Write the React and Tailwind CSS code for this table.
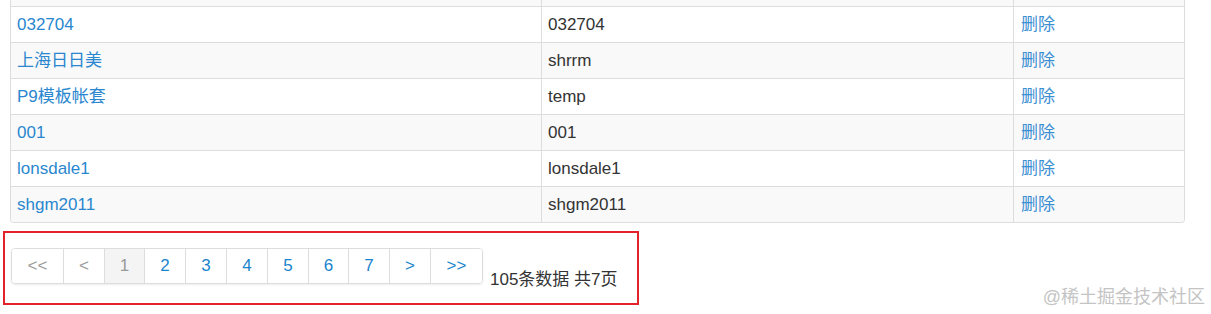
import React from "react";

const rows = [
  { name: "032704", code: "032704" },
  { name: "上海日日美", code: "shrrm" },
  { name: "P9模板帐套", code: "temp" },
  { name: "001", code: "001" },
  { name: "lonsdale1", code: "lonsdale1" },
  { name: "shgm2011", code: "shgm2011" },
];

const pages = [
  { label: "<<", w: "w-[51px]", kind: "disabled" },
  { label: "<", w: "w-[41px]", kind: "disabled" },
  { label: "1", w: "w-[40px]", kind: "active" },
  { label: "2", w: "w-[41px]", kind: "link" },
  { label: "3", w: "w-[41px]", kind: "link" },
  { label: "4", w: "w-[41px]", kind: "link" },
  { label: "5", w: "w-[41px]", kind: "link" },
  { label: "6", w: "w-[40px]", kind: "link" },
  { label: "7", w: "w-[41px]", kind: "link" },
  { label: ">", w: "w-[41px]", kind: "link" },
  { label: ">>", w: "w-[52px]", kind: "link" },
];

export default function App() {
  const font = {
    fontFamily: '"Liberation Sans", Arial, "Noto Sans CJK SC", sans-serif',
  };
  return (
    <div className="relative w-[1211px] h-[314px] bg-white overflow-hidden text-[#333]" style={font}>
      {/* table */}
      <div className="ml-[10px] w-[1175px] border border-t-0 border-[#ddd] rounded-b-[4px] overflow-hidden text-[17px] leading-[20px]">
        <div className="grid grid-cols-[530px_472px_1fr] h-[6px] bg-[#f9f9f9]">
          <div />
          <div className="border-l border-[#ddd]" />
          <div className="border-l border-[#ddd]" />
        </div>
        {rows.map((r, i) => (
          <div
            key={i}
            className={
              "grid grid-cols-[530px_472px_1fr] h-[36px] border-t border-[#ddd] " +
              (i % 2 === 1 ? "bg-[#f9f9f9]" : "bg-white")
            }
          >
            <div className="flex items-center px-[6px] text-[#2a87cf]">{r.name}</div>
            <div className="flex items-center border-l border-[#ddd] px-[6px] text-[#333]">{r.code}</div>
            <div className="flex items-center border-l border-[#ddd] px-[7px] text-[#3b8fd3]">删除</div>
          </div>
        ))}
      </div>

      {/* red highlight box */}
      <div className="ml-[3px] mt-[8px] w-[636px] h-[74px] border-2 border-[#e4222b] pl-[6px] pt-[15px]">
        <div className="flex items-start">
          <div className="flex h-[36px] border border-[#ddd] rounded-[4px] overflow-hidden shadow-[0_1px_2px_rgba(0,0,0,0.08)] text-[17px]">
            {pages.map((p, i) => (
              <div
                key={i}
                className={
                  "flex items-center justify-center " +
                  p.w +
                  " " +
                  (i > 0 ? "border-l border-[#ddd] " : "") +
                  (p.kind === "disabled"
                    ? "text-[#9a9a9a] bg-white"
                    : p.kind === "active"
                    ? "text-[#999] bg-[#f4f4f4]"
                    : "text-[#1a84cc] bg-white")
                }
              >
                {p.label}
              </div>
            ))}
          </div>
          <div className="ml-[7px] mt-[22px] text-[17px] leading-[20px] text-[#333] whitespace-nowrap">
            105条数据 共7页
          </div>
        </div>
      </div>

      {/* watermark */}
      <div className="absolute right-[6px] top-[286px] text-[18px] leading-[22px] text-[#c4c4c4] whitespace-nowrap">
        @稀土掘金技术社区
      </div>
    </div>
  );
}
